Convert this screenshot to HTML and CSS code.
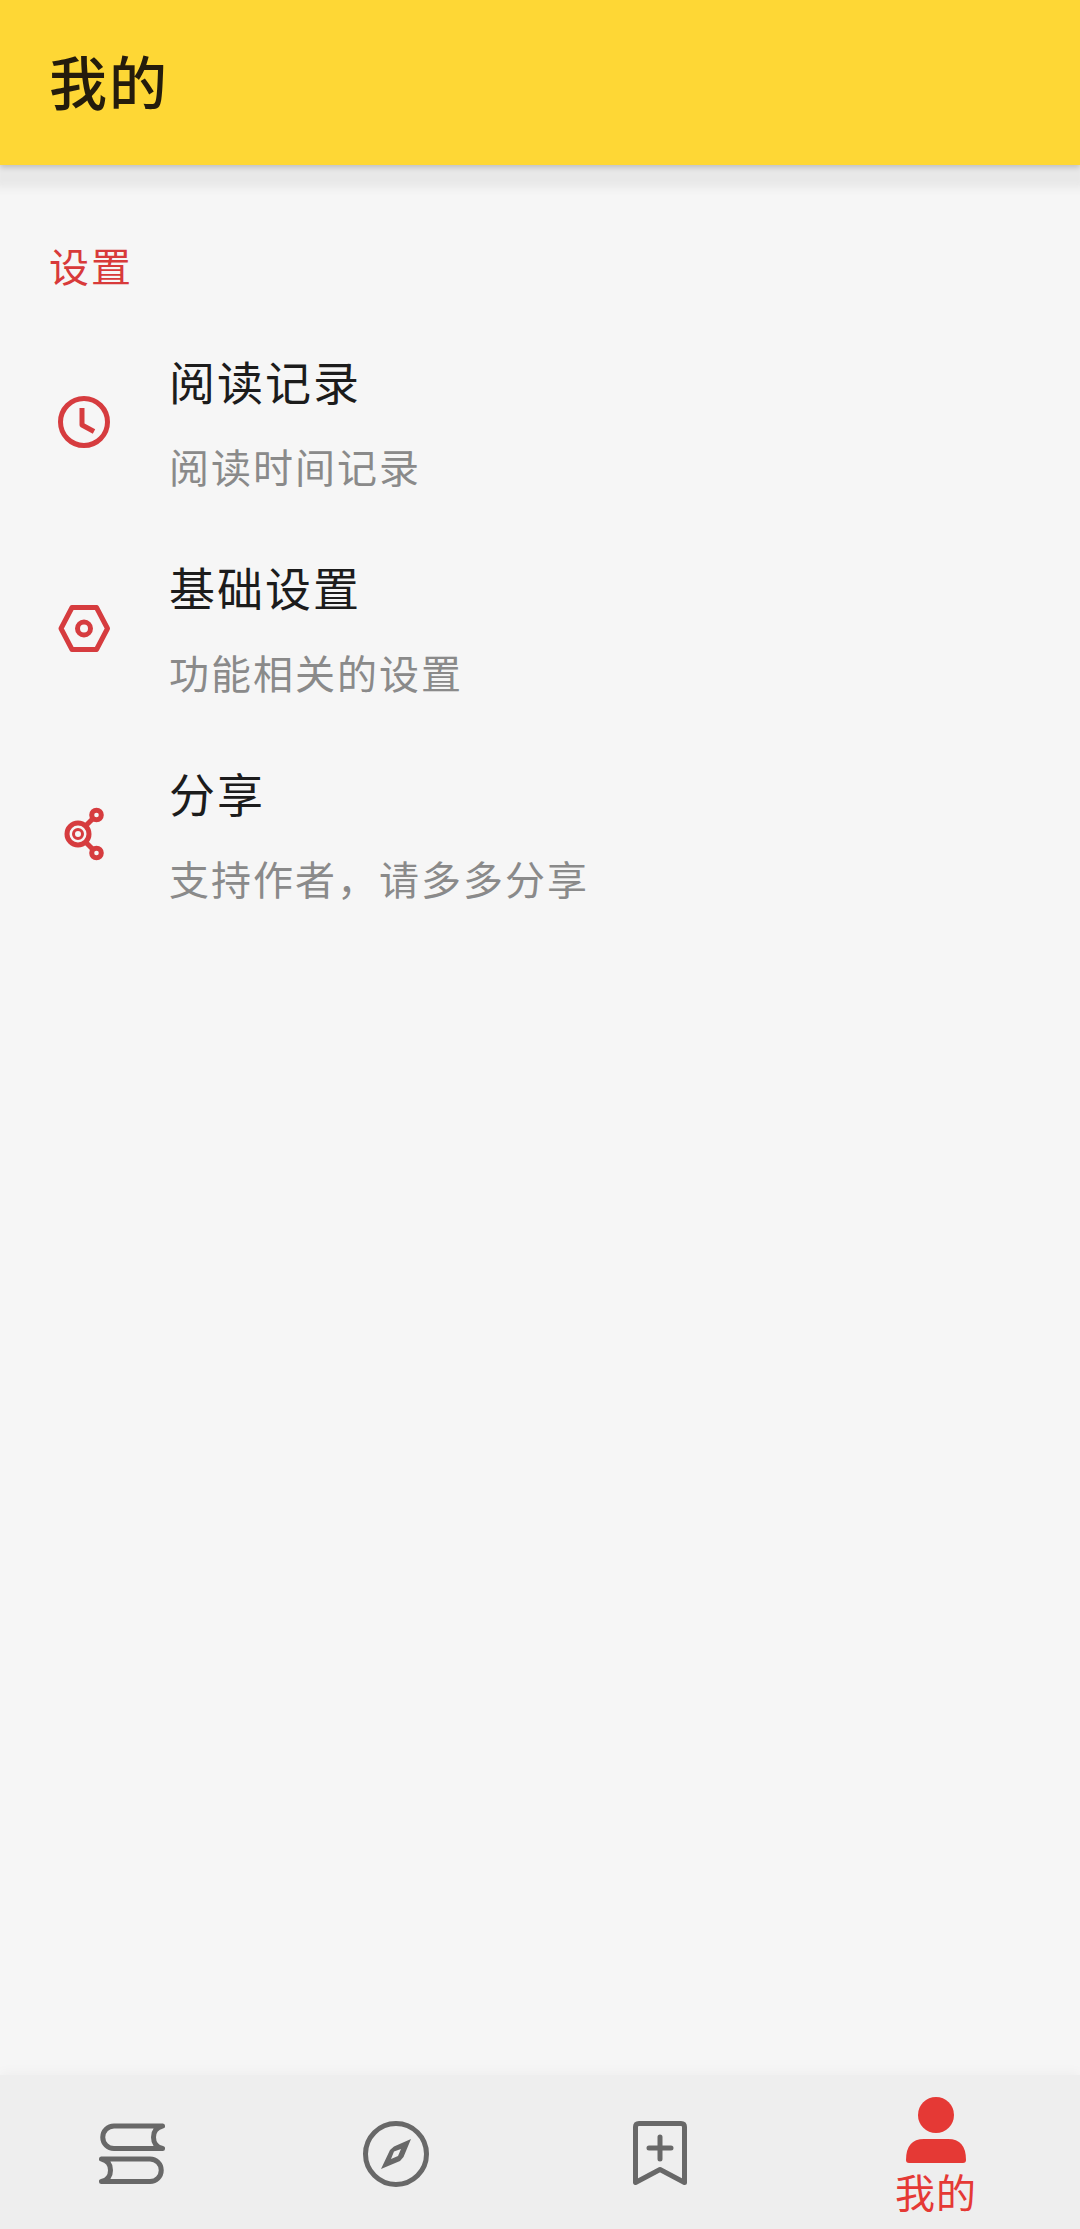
FILE: index.html
```
<!DOCTYPE html>
<html lang="zh-CN">
<head>
    <meta charset="UTF-8">
    <meta name="viewport" content="width=device-width, initial-scale=1.0">
    <title>我的</title>
    <link rel="stylesheet" href="styles.css">
</head>
<body>
    <header class="app-bar">
        <h1>我的</h1>
    </header>

    <main class="content">
        <h2 class="section-title">设置</h2>

        <div class="item">
            <svg class="item-icon" viewBox="0 0 60 60">
                <circle cx="30" cy="30" r="23.5"/>
                <path d="M28 16v17l12 6.500"/>
            </svg>
            <div class="item-text">
                <h3>阅读记录</h3>
                <p>阅读时间记录</p>
            </div>
        </div>

        <div class="item">
            <svg class="item-icon" viewBox="0 0 60 60">
                <path d="M18 9.500h24.500L53.500 30.500 42.500 51.500H18L7 30.500z"/>
                <circle cx="30" cy="30.500" r="6.500"/>
            </svg>
            <div class="item-text">
                <h3>基础设置</h3>
                <p>功能相关的设置</p>
            </div>
        </div>

        <div class="item">
            <svg class="item-icon" viewBox="0 0 60 60">
                <circle cx="24" cy="30" r="11"/>
                <circle cx="24" cy="30" r="4.500" stroke-width="3"/>
                <circle cx="42.500" cy="11" r="4.800"/>
                <circle cx="42.500" cy="49" r="4.800"/>
                <path d="M32 21.500l7-7M32 38.500l7 7"/>
            </svg>
            <div class="item-text">
                <h3>分享</h3>
                <p>支持作者，请多多分享</p>
            </div>
        </div>
    </main>

    <nav class="tab-bar">
        <a class="tab">
            <svg class="tab-icon" viewBox="0 0 72 72">
                <path d="M66.500 8H18a11 11 0 0 0 0 22.500h48.500M66.500 8q-9 2-9 11.250t9 11.250M5.500 41H54a11 11 0 0 1 0 22.500H5.500M5.500 41q9 2 9 11.250t-9 11.250"/>
            </svg>
        </a>
        <a class="tab">
            <svg class="tab-icon" viewBox="0 0 72 72">
                <circle cx="36" cy="36" r="30.500"/>
                <path class="fill" fill-rule="evenodd" d="M51 21L43.500 39 40 43 21 51 30 32 34 28.500zM41 31L34 33.500 31 41 38 38z"/>
            </svg>
        </a>
        <a class="tab">
            <svg class="tab-icon" viewBox="0 0 72 72">
                <path d="M11.500 9q0-3.500 3.500-3.500h42q3.500 0 3.500 3.500V64.500L36 51.500 11.500 64.500z"/>
                <path d="M36 19v22M25 30h22"/>
            </svg>
        </a>
        <a class="tab active">
            <svg class="tab-icon" viewBox="0 0 72 72">
                <circle class="fill" cx="36" cy="21" r="18"/>
                <path class="fill" d="M6 66q0-21 18-21h24q18 0 18 21 0 3-3 3H9q-3 0-3-3z"/>
            </svg>
            <span>我的</span>
        </a>
    </nav>
</body>
</html>
```
FILE: styles.css
```
* {
    box-sizing: border-box;
}
body {
    margin: 0;
    height: 2229px;
    display: flex;
    flex-direction: column;
    background: #f6f6f6;
    font-family: "Noto Sans CJK SC", sans-serif;
    color: #1c1c1c;
}
h1, h2, h3, p {
    margin: 0;
    font-weight: 400;
}

/* header */
.app-bar {
    height: 165px;
    padding: 0 50px 6px 49px;
    display: flex;
    align-items: center;
    background: #fed735;
    box-shadow: 0 2px 6px rgba(0, 0, 0, 0.2), 0 17px 8px 6px #e8e8e8;
}
.app-bar h1 {
    font-size: 58px;
    line-height: 84px;
    font-weight: 500;
    letter-spacing: 2px;
    color: #241c0c;
}

/* settings list */
.content {
    flex: 1;
    padding-top: 70px;
}
.section-title {
    padding-left: 49px;
    margin-bottom: 24px;
    font-size: 40px;
    line-height: 60px;
    letter-spacing: 2px;
    color: #d83a3a;
}
.item {
    height: 206px;
    padding-left: 54px;
    display: flex;
    align-items: center;
}
.item-icon {
    width: 60px;
    height: 60px;
    fill: none;
    stroke: #d63c3f;
    stroke-width: 5;
    stroke-linejoin: round;
}
.item-text {
    padding: 0 0 4px 55px;
}
.item-text h3 {
    font-size: 46px;
    line-height: 70px;
    letter-spacing: 2px;
}
.item-text p {
    margin-top: 21px;
    font-size: 40px;
    line-height: 60px;
    letter-spacing: 2px;
    color: #8a8a8a;
}

/* bottom navigation */
.tab-bar {
    height: 154px;
    display: flex;
    background: #eee;
    box-shadow: 0 -2px 12px rgba(0, 0, 0, 0.04);
}
.tab {
    width: 264px;
    padding-top: 43px;
    display: flex;
    flex-direction: column;
    align-items: center;
}
.tab-icon {
    width: 72px;
    height: 72px;
    fill: none;
    stroke: #686868;
    stroke-width: 5;
    stroke-linecap: round;
    stroke-linejoin: round;
}
.tab-icon .fill {
    fill: #686868;
    stroke: none;
}
.tab.active {
    width: 288px;
    padding-top: 19px;
    color: #e53935;
}
.tab.active .fill {
    fill: #e53935;
}
.tab span {
    font-size: 40px;
    line-height: 50px;
    letter-spacing: 1px;
}
```
